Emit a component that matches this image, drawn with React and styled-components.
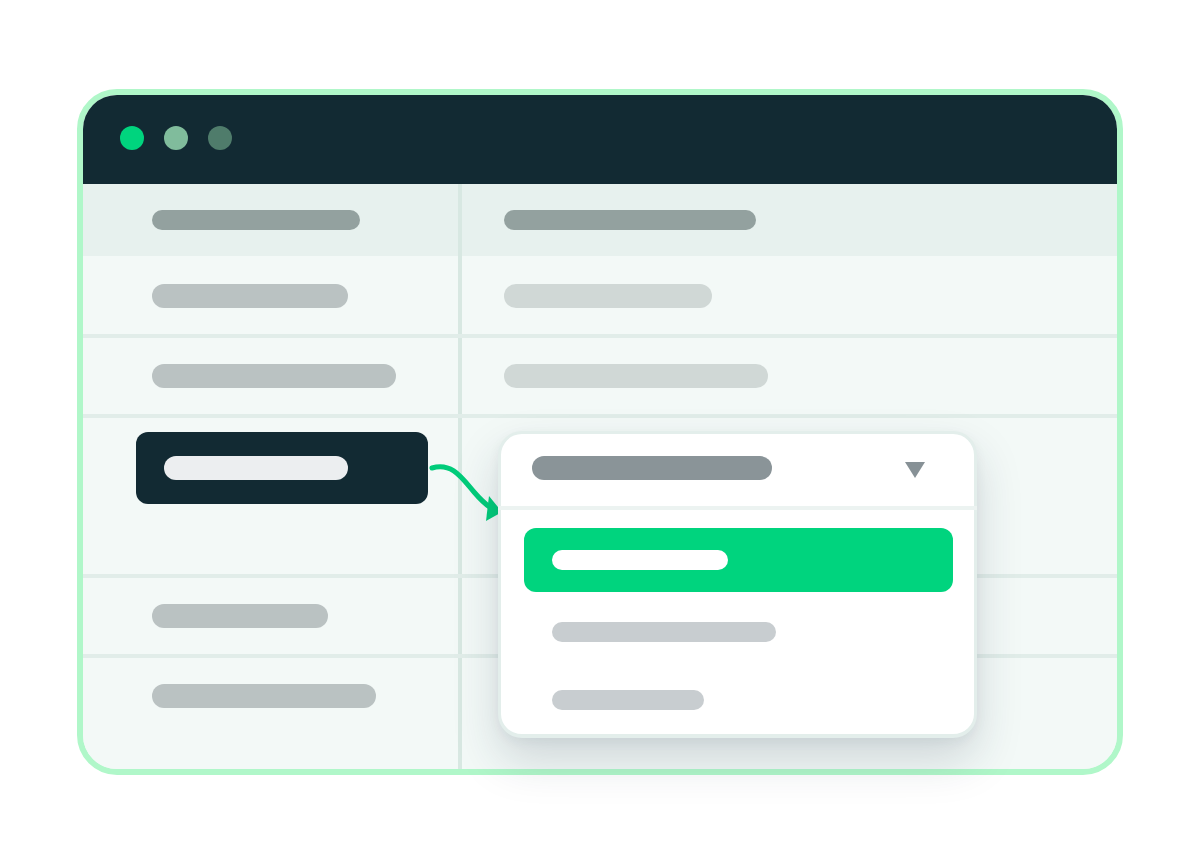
import styled, { createGlobalStyle } from "styled-components";

const Global = createGlobalStyle`
  *, *::before, *::after {
    box-sizing: border-box;
  }
  html, body {
    margin: 0;
    padding: 0;
    background: #ffffff;
    font-family: "Inter", "Liberation Sans", sans-serif;
  }
`

const Page = styled.div`
  width: 1200px;
  height: 864px;
  display: flex;
  align-items: center;
  justify-content: center;
`

const Window = styled.div`
  width: 1046px;
  height: 686px;
  border: 6px solid #b0f7c9;
  border-radius: 40px;
  display: flex;
  flex-direction: column;
  background: #f3f9f7;
`

const TitleBar = styled.div`
  height: 89px;
  flex-shrink: 0;
  background: #122a33;
  border-radius: 34px 34px 0 0;
  display: flex;
  align-items: center;
  gap: 20px;
  padding: 0 0 3px 37px;
`

const Dot = styled.span`
  width: 24px;
  height: 24px;
  border-radius: 50%;
  background: ${p => p.color};
`

const Table = styled.div`
  position: relative;
  flex: 1;
  display: flex;
  flex-direction: column;
`

const Row = styled.div`
  display: flex;
  height: ${p => p.h}px;
  flex-shrink: 0;
  background: ${p => (p.head ? "#e7f1ee" : "#f3f9f7")};
  border-bottom: ${p => (p.line ? "4px solid #e1ede9" : "none")};
  ${p => p.grow && "flex: 1; border-radius: 0 0 34px 34px;"}
`

const LeftCell = styled.div`
  width: 379px;
  flex-shrink: 0;
  border-right: 4px solid #d8e8e2;
  display: flex;
  align-items: ${p => (p.top ? "flex-start" : "center")};
  padding-left: ${p => p.pl || 69}px;
  padding-top: ${p => p.pt || 0}px;
`

const RightCell = styled.div`
  flex: 1;
  display: flex;
  align-items: center;
  padding-left: 42px;
  padding-top: ${p => p.pt || 0}px;
`

const Pill = styled.span`
  display: block;
  width: ${p => p.w}px;
  height: ${p => p.h || 24}px;
  border-radius: 12px;
  background: ${p => p.color};
`

const Selected = styled.div`
  width: 292px;
  height: 72px;
  border-radius: 12px;
  background: #122a33;
  display: flex;
  align-items: center;
  padding-left: 28px;
`

const Dropdown = styled.div`
  position: absolute;
  left: 415px;
  top: 247px;
  width: 479px;
  height: 307px;
  border: 3px solid #e3eeeb;
  border-bottom-width: 4px;
  border-radius: 24px;
  background: #ffffff;
  box-shadow: 0 22px 46px rgba(30, 50, 70, 0.17), 0 4px 12px rgba(18, 42, 51, 0.05);
  display: flex;
  flex-direction: column;
`

const DropHead = styled.div`
  height: 76px;
  flex-shrink: 0;
  display: flex;
  align-items: center;
  justify-content: space-between;
  border-bottom: 4px solid #ecf3f1;
  margin: 0 -3px;
  padding: 0 52px 4px 34px;
`

const Caret = styled.span`
  width: 0;
  height: 0;
  border-left: 10px solid transparent;
  border-right: 10px solid transparent;
  border-top: 16px solid #879196;
  margin-top: 4px;
`

const Options = styled.div`
  display: flex;
  flex-direction: column;
  padding: 18px 21px 0 23px;
`

const Option = styled.div`
  height: 64px;
  flex-shrink: 0;
  margin-top: ${p => p.mt || 0}px;
  border-radius: 12px;
  background: ${p => (p.active ? "#00d47e" : "transparent")};
  display: flex;
  align-items: center;
  padding-left: 28px;
`

const Arrow = styled.svg`
  position: absolute;
  left: 337px;
  top: 266px;
  width: 90px;
  height: 80px;
  overflow: visible;
`

export default function App() {
  return (
    <Page>
      <Global />
      <Window>
        <TitleBar>
          <Dot color="#00d47e" />
          <Dot color="#80bc9c" />
          <Dot color="#4f7c6b" />
        </TitleBar>
        <Table>
          <Row h={72} head>
            <LeftCell><Pill w={208} h={20} color="#93a19f" /></LeftCell>
            <RightCell><Pill w={252} h={20} color="#93a19f" /></RightCell>
          </Row>
          <Row h={82} line>
            <LeftCell pt={2}><Pill w={196} color="#bac2c2" /></LeftCell>
            <RightCell pt={2}><Pill w={208} color="#d0d8d6" /></RightCell>
          </Row>
          <Row h={80} line>
            <LeftCell><Pill w={244} color="#bac2c2" /></LeftCell>
            <RightCell><Pill w={264} color="#d0d8d6" /></RightCell>
          </Row>
          <Row h={160} line>
            <LeftCell top pl={53} pt={14}>
              <Selected><Pill w={184} color="#eceef0" /></Selected>
            </LeftCell>
            <RightCell />
          </Row>
          <Row h={80} line>
            <LeftCell><Pill w={176} color="#bac2c2" /></LeftCell>
            <RightCell />
          </Row>
          <Row grow>
            <LeftCell top pt={26}>
              <Pill w={224} color="#bac2c2" />
            </LeftCell>
            <RightCell />
          </Row>

          <Arrow viewBox="420 450 90 80">
            <path
              d="M432 468 C 452 462, 462 478, 474 492 C 480 499, 485 504, 491 508"
              fill="none"
              stroke="#00cc7a"
              strokeWidth="5"
              strokeLinecap="round"
            />
            <polygon points="489,496 502,512 486,521" fill="#00cc7a" />
          </Arrow>

          <Dropdown>
            <DropHead>
              <Pill w={240} color="#8a9498" />
              <Caret />
            </DropHead>
            <Options>
              <Option active><Pill w={176} h={20} color="#ffffff" /></Option>
              <Option mt={8}><Pill w={224} h={20} color="#c8cdd0" /></Option>
              <Option mt={4}><Pill w={152} h={20} color="#c8cdd0" /></Option>
            </Options>
          </Dropdown>
        </Table>
      </Window>
    </Page>
  )
}
